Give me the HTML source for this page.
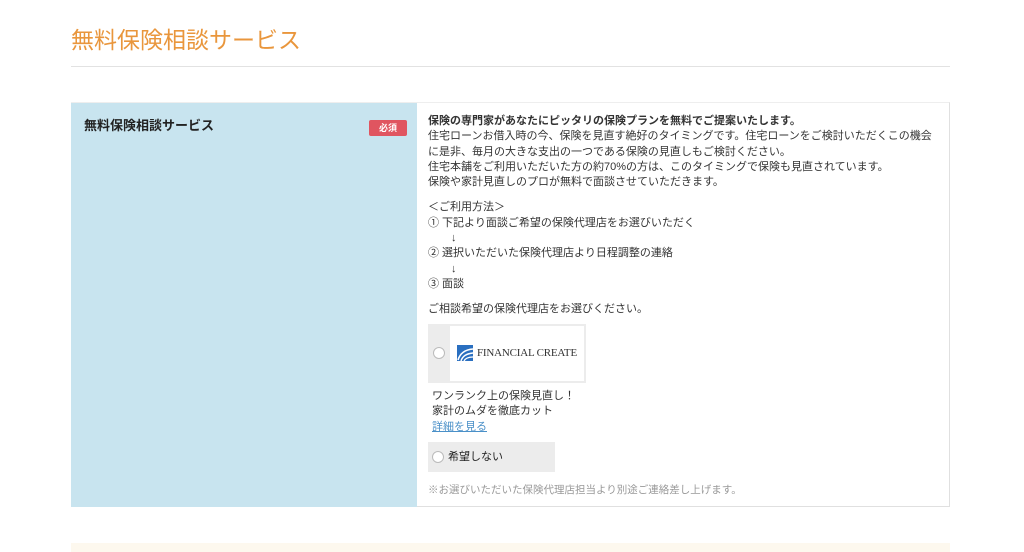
<!DOCTYPE html>
<html><head><meta charset="utf-8"><style>
*{margin:0;padding:0;box-sizing:border-box}
body{width:1024px;height:552px;background:#fff;font-family:"Liberation Sans","Noto Sans CJK JP",sans-serif;position:relative;overflow:hidden;color:#222}
.t{position:absolute;left:71px;top:21px;font-size:23px;color:#e9963c;letter-spacing:0}
.hr{position:absolute;left:71px;top:66px;width:879px;height:1px;background:#e2e2e2}
.tbl{position:absolute;left:71px;top:102px;width:879px;height:405px;border:1px solid #e0e0e0;border-left:none;border-top:1px solid #eee}
.lc{position:absolute;left:0;top:0;width:346px;height:404px;background:#c8e4ef}
.lc .lb{position:absolute;left:13px;top:12px;font-size:13px;font-weight:bold;color:#222}
.req{position:absolute;left:298px;top:17px;width:38px;height:16px;background:#e05560;border-radius:2px;color:#fff;font-size:9px;font-weight:bold;text-align:center;line-height:16px}
.rc{position:absolute;left:357px;top:11px;font-size:11px;line-height:15.3px;color:#333;width:512px}
.rc p{margin-bottom:10px}
.ar{padding-left:23px}
.logo{position:absolute;left:357px;top:221px;width:158px;height:59px;background:#ececec}
.logo .w{position:absolute;left:22px;top:2px;width:134px;height:55px;background:#fff}
.rad{position:absolute;width:12px;height:12px;border-radius:50%;border:1px solid #bbb;background:#fff}
.ft{position:absolute;left:49px;top:21px;font-family:"Liberation Serif",serif;font-size:11px;color:#333;letter-spacing:-0.2px}
.ex{position:absolute;left:361px;top:286px;font-size:11px;line-height:15.3px;color:#333}
.ex a{color:#4a90c8;text-decoration:underline}
.no{position:absolute;left:357px;top:339px;width:127px;height:30px;background:#ececec;font-size:11px;line-height:30px;padding-left:20px}
.note{position:absolute;left:357px;top:379px;font-size:10.5px;color:#999}
.bot{position:absolute;left:71px;top:543px;width:879px;height:9px;background:#fdf8ee}
</style></head><body>
<div class="t">無料保険相談サービス</div>
<div class="hr"></div>
<div class="tbl">
<div class="lc"><div class="lb">無料保険相談サービス</div><div class="req">必須</div></div>
<div class="rc"><p><b>保険の専門家があなたにピッタリの保険プランを無料でご提案いたします。</b><br>住宅ローンお借入時の今、保険を見直す絶好のタイミングです。住宅ローンをご検討いただくこの機会<br>に是非、毎月の大きな支出の一つである保険の見直しもご検討ください。<br>住宅本舗をご利用いただいた方の約70%の方は、このタイミングで保険も見直されています。<br>保険や家計見直しのプロが無料で面談させていただきます。</p><p>＜ご利用方法＞<br>① 下記より面談ご希望の保険代理店をお選びいただく<br><span class="ar">↓</span><br>② 選択いただいた保険代理店より日程調整の連絡<br><span class="ar">↓</span><br>③ 面談</p><p>ご相談希望の保険代理店をお選びください。</p></div>
<div class="logo"><div class="rad" style="left:5px;top:23px"></div><div class="w">
<svg style="position:absolute;left:7px;top:19px" width="16" height="16" viewBox="0 0 16 16"><rect width="16" height="16" fill="#2a6fc0"/><path d="M1 15 Q4 5 16 4" stroke="#fff" stroke-width="1.6" fill="none"/><path d="M4 16 Q6 9 16 8" stroke="#fff" stroke-width="1.4" fill="none"/><path d="M7 16 Q9 12 16 12" stroke="#fff" stroke-width="1.2" fill="none"/></svg>
<div class="ft" style="left:27px">FINANCIAL CREATE</div></div></div>
<div class="ex">ワンランク上の保険見直し！<br>家計のムダを徹底カット<br><a>詳細を見る</a></div>
<div class="no"><div class="rad" style="left:4px;top:9px"></div>希望しない</div>
<div class="note">※お選びいただいた保険代理店担当より別途ご連絡差し上げます。</div>
</div>
<div class="bot"></div>
</body></html>
